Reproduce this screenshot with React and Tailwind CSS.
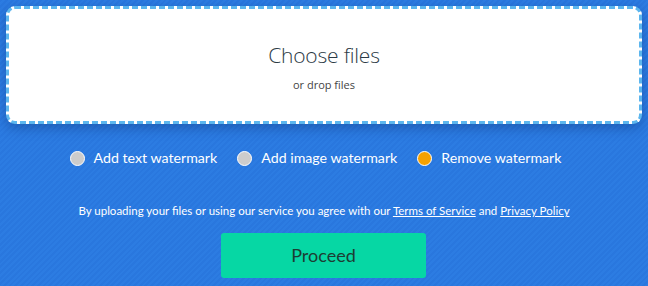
import React from "react";

function Radio({ label, active }) {
  return (
    <label className="flex items-center gap-[9px] cursor-pointer">
      <span
        className={
          "w-[15px] h-[15px] rounded-full border-[1.5px] border-white " +
          (active ? "bg-[#f6a100]" : "bg-[#cccccc]")
        }
      />
      <span className="text-[14.2px] text-white leading-none">{label}</span>
    </label>
  );
}

export default function App() {
  return (
    <div
      className="w-[648px] h-[286px] overflow-hidden bg-[#2a79df] bg-[repeating-linear-gradient(135deg,#2977de_0px,#2977de_2px,#2c7ce2_2px,#2c7ce2_4px)] px-[6px] pt-[6px] flex flex-col items-center"
      style={{ fontFamily: 'Lato, "Open Sans", sans-serif' }}
    >
      <div className="w-full h-[118px] bg-white rounded-[9px] border-[3px] border-dashed border-[#5cb6ee] shadow-[0_4px_12px_rgba(10,40,100,0.35)] flex flex-col items-center">
        <div
          className="mt-[36px] text-[21px] font-light text-[#2b3a45] leading-none tracking-[-0.2px]"
          style={{ fontFamily: '"Open Sans", sans-serif' }}
        >
          Choose files
        </div>
        <div
          className="mt-[13px] text-[11px] text-[#444] leading-none"
          style={{ fontFamily: '"Open Sans", sans-serif' }}
        >
          or drop files
        </div>
      </div>
      <div className="mt-[27px] flex items-center gap-[20px] mr-[17px]">
        <Radio label="Add text watermark" />
        <Radio label="Add image watermark" />
        <Radio label="Remove watermark" active />
      </div>
      <div className="mt-[39px] text-[11.5px] text-white leading-none">
        By uploading your files or using our service you agree with our{" "}
        <a className="underline">Terms of Service</a> and{" "}
        <a className="underline">Privacy Policy</a>
      </div>
      <button className="mt-[16px] ml-[-1px] w-[205px] h-[45px] rounded-[3px] bg-[#06d7a4] text-[18px] text-[#1d3d33] flex items-center justify-center">
        Proceed
      </button>
    </div>
  );
}
